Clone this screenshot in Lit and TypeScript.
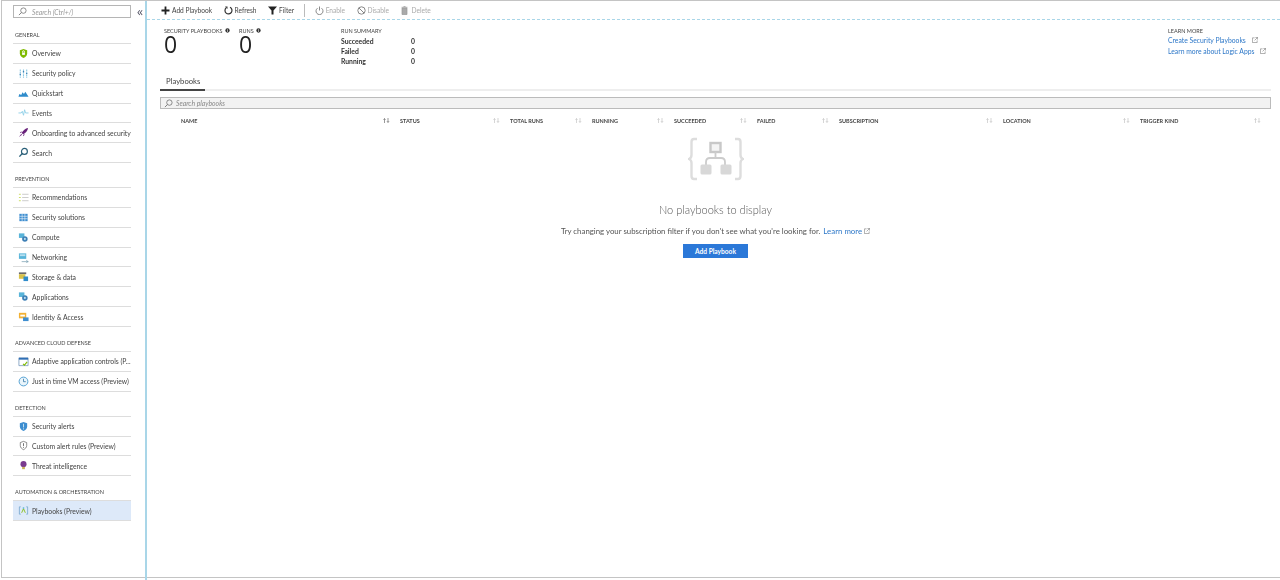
import { LitElement, html, css, svg } from 'lit'
import { customElement } from 'lit/decorators.js'

const icons: Record<string, unknown> = {
    overview: svg`<path d="M6 1 10 2.500V6c0 2.500-1.800 4-4 5-2.200-1-4-2.500-4-5V2.500z" fill="#7fba00"/><path d="M4.500 5h3v2.500h-3z" fill="#fff"/><path d="M5 5V4a1 1 0 0 1 2 0v1" fill="none" stroke="#fff"/>`,
    policy: svg`<path d="M2.500 1.500v9M6 1.500v9M9.500 1.500v9" stroke="#8cc8e2" stroke-width="1.200" stroke-dasharray="2 .6"/><path d="M1.800 7h1.400M5.300 4h1.400M8.800 6h1.400" stroke="#3e7fb5" stroke-width="1.200"/>`,
    quickstart: svg`<path d="M.500 9.500 1.500 6.500l2 1 1.500-3 1.500 2 1.500-2.500 3.500 5.500z" fill="#2f8ccb"/>`,
    events: svg`<path d="M.500 6.500h3l1.200-1.800L6 9l1.200-6 1 3.500h3.300" fill="none" stroke="#8fd0e8" stroke-width="1"/>`,
    rocket: svg`<path d="M11 1C8 1.500 5.500 3.500 4 6.500L5.500 8C8.500 6.500 10.500 4 11 1zM4 4.500 2 6l1.500.5zM7.500 8 6 10l-.5-1.500zM3.500 7.500 1 11l3.500-2.500z" fill="#68217a"/>`,
    search: svg`<circle cx="7" cy="4.800" r="3.200" fill="none" stroke="#2a5f78" stroke-width="1.300"/><path d="M4.700 7.200 1.500 10.500" stroke="#2a5f78" stroke-width="1.500"/>`,
    recs: svg`<path d="M4.500 2.500h7M4.500 6h7M4.500 9.500h7" stroke="#bbb" stroke-width=".8"/><path d="M1 2.500h2M1 6h2M1 9.500h2" stroke="#c8dc5a" stroke-width="1"/>`,
    solutions: svg`<path d="M1.500 2h9v8h-9z" fill="#3e8ed0"/><path d="M4.500 2v8M7.500 2v8M1.500 4.700h9M1.500 7.300h9" stroke="#fff" stroke-width=".6"/>`,
    compute: svg`<path d="M1 1.500h6v5H1z" fill="#59b4d9"/><circle cx="7.500" cy="7.500" r="3" fill="#3e7fb5"/><circle cx="7.500" cy="7.500" r="1.100" fill="#b8e0f0"/>`,
    network: svg`<path d="M1 1.500h8v6H1z" fill="#59b4d9"/><path d="M2 2.500h6v2H2z" fill="#b8e0f0"/><path d="M4 10.500h7.500M9 9 11 10.500 9 11.500" stroke="#7a9fb0" fill="none" stroke-width=".8"/>`,
    storage: svg`<path d="M1 1.500h8v2H1z" fill="#6b6b6b"/><path d="M1 3.500h7v5H1z" fill="#d9c24a"/><path d="M6 6h5v5H6z" fill="#2f8ccb"/>`,
    identity: svg`<path d="M1 2h8v6H1z" fill="#f2b134"/><path d="M2.500 4h5v2h-5z" fill="#fff"/><path d="M5.500 7h6v4h-6z" fill="#3e8ed0"/>`,
    adaptive: svg`<path d="M1 2h10v8.500H1z" fill="#fff" stroke="#6a8fb5" stroke-width=".8"/><path d="M1 2h10v2H1z" fill="#2f6fb5"/><path d="M5.500 8.500 7 10l3-3.500" stroke="#7fba00" fill="none" stroke-width="1.200"/>`,
    clock: svg`<circle cx="6" cy="6" r="4.800" fill="#eaf5fb" stroke="#4a9bd0"/><path d="M6 3v3.200h2.500" stroke="#2a6f9f" fill="none" stroke-width=".8"/>`,
    alerts: svg`<path d="M6 1 10 2.500V6c0 2.500-1.800 4-4 5-2.200-1-4-2.500-4-5V2.500z" fill="#3e8ed0"/><path d="M6 3v4M6 8v1.200" stroke="#cfe8f5"/>`,
    custom: svg`<path d="M6 1.500 9.500 2.800V6c0 2.200-1.500 3.500-3.500 4.500C4 9.500 2.500 8.200 2.500 6V2.800z" fill="none" stroke="#666" stroke-width=".8"/><path d="M6 3.500v3M6 7.500v1" stroke="#666"/>`,
    threat: svg`<circle cx="6" cy="4.500" r="3.300" fill="#7a3b8f"/><path d="M4.500 7.500h3V10h-3z" fill="#c9b458"/>`,
    playbooks: svg`<path d="M3 2 1.500 2v8H3M9 2h1.500v8H9" fill="none" stroke="#6a9fc9" stroke-width=".8"/><path d="M4 8.500 6 4l2 4.500" fill="none" stroke="#7fba00" stroke-width=".9"/><path d="M5.200 2.500h1.600v1.600H5.200z" fill="#59b4d9"/>`,
}

const sections = [
    {
        title: 'GENERAL',
        items: [
            ['overview', 'Overview'],
            ['policy', 'Security policy'],
            ['quickstart', 'Quickstart'],
            ['events', 'Events'],
            ['rocket', 'Onboarding to advanced security'],
            ['search', 'Search'],
        ],
    },
    {
        title: 'PREVENTION',
        items: [
            ['recs', 'Recommendations'],
            ['solutions', 'Security solutions'],
            ['compute', 'Compute'],
            ['network', 'Networking'],
            ['storage', 'Storage & data'],
            ['compute', 'Applications'],
            ['identity', 'Identity & Access'],
        ],
    },
    {
        title: 'ADVANCED CLOUD DEFENSE',
        items: [
            ['adaptive', 'Adaptive application controls (P...'],
            ['clock', 'Just in time VM access (Preview)'],
        ],
    },
    {
        title: 'DETECTION',
        items: [
            ['alerts', 'Security alerts'],
            ['custom', 'Custom alert rules (Preview)'],
            ['threat', 'Threat intelligence'],
        ],
    },
    {
        title: 'AUTOMATION & ORCHESTRATION',
        items: [['playbooks', 'Playbooks (Preview)']],
    },
]

const columns = ['NAME', 'STATUS', 'TOTAL RUNS', 'RUNNING', 'SUCCEEDED', 'FAILED', 'SUBSCRIPTION', 'LOCATION', 'TRIGGER KIND']

const externalIcon = html`<svg class="ext" viewBox="0 0 7 7"><path d="M3 1H.500v5.500H6V4M4 .500h2.500V3M6.500 .500 3 4" fill="none" stroke="#777" stroke-width=".7"/></svg>`
const infoIcon = html`<svg class="info" viewBox="0 0 6 6"><circle cx="3" cy="3" r="2.600" fill="#333"/><path d="M3 2.600v2M3 1.200v.8" stroke="#fff" stroke-width=".8"/></svg>`
const magnifier = html`<svg class="glass" viewBox="0 0 10 10"><circle cx="6" cy="4" r="3" fill="none" stroke="#666" stroke-width=".8"/><path d="M3.800 6.200 1 9" stroke="#666" stroke-width=".9"/></svg>`
const sortIcon = html`<svg class="sort" viewBox="0 0 7 5"><path d="M1.500 5V.800M.500 1.800 1.500 .500l1 1.300M5 0v4.200M4 3.200 5 4.500l1-1.300" fill="none" stroke="currentColor" stroke-width=".6"/></svg>`

@customElement('app-root')
export class AppRoot extends LitElement {
    static styles = css`
        :host {
            display: block;
            width: 1280px;
            height: 580px;
            overflow: hidden;
            background: #fff;
            font-family: Lato, 'Open Sans', 'Liberation Sans', sans-serif;
            font-size: 6.800px;
            color: #444;
        }

        .frame {
            display: flex;
            height: 578px;
            margin-left: 1px;
            box-sizing: border-box;
            border-left: 1px solid #c4c4c4;
            border-top: 1px solid #c4c4c4;
            border-bottom: 1px solid #c4c4c4;
            filter: blur(0.3px);
        }

        .sidebar {
            flex: none;
            width: 145px;
            box-sizing: border-box;
            padding: 4px 0 0 11px;
            border-right: 2px solid #a9d6e8;
            height: 580px;
        }

        .side-top {
            display: flex;
            align-items: center;
            width: 131px;
            margin-bottom: 1px;
        }

        .side-search {
            display: flex;
            align-items: center;
            gap: 5px;
            box-sizing: border-box;
            width: 118px;
            height: 13px;
            padding-left: 4px;
            border: 1px solid #b5b5b5;
            font-style: italic;
            color: #999;
        }

        .glass {
            width: 9px;
            height: 9px;
            flex: none;
        }

        .collapse {
            margin-left: 6px;
            font-family: 'Open Sans', sans-serif;
            font-size: 12px;
            line-height: 10px;
            color: #556;
        }

        .section {
            width: 118px;
        }

        .heading {
            display: flex;
            align-items: flex-end;
            box-sizing: border-box;
            height: 25px;
            padding: 0 0 5px 2px;
            font-size: 5.500px;
            color: #444;
            border-bottom: 1px solid #ddd;
        }

        .row {
            display: flex;
            align-items: center;
            gap: 3px;
            box-sizing: border-box;
            height: 19.850px;
            padding-left: 5px;
            border-bottom: 1px solid #ddd;
            white-space: nowrap;
        }

        .row.active {
            background: #dde9f9;
        }

        .row svg {
            width: 11px;
            height: 11px;
            flex: none;
        }

        .main {
            flex: 1;
            min-width: 0;
            display: flex;
            flex-direction: column;
        }

        .toolbar {
            display: flex;
            align-items: center;
            box-sizing: border-box;
            height: 19px;
            padding-left: 14px;
            border-bottom: 1px dashed #a9d6e8;
            font-size: 6.600px;
        }

        .tool {
            display: flex;
            align-items: center;
            gap: 2px;
            margin-right: 11.500px;
            white-space: nowrap;
        }

        .tool svg {
            width: 9px;
            height: 9px;
            flex: none;
        }

        .tool.off {
            color: #aaa;
        }

        .divider {
            width: 1px;
            height: 13px;
            background: #bbb;
            margin: 0 10px 0 -2px;
        }

        .summary {
            display: flex;
            height: 55px;
            padding: 7px 0 0 17px;
            box-sizing: border-box;
        }

        .stat {
            width: 75px;
        }

        .stat + .stat {
            width: 102px;
        }

        .label {
            display: flex;
            align-items: center;
            gap: 2px;
            height: 7px;
            font-size: 5.500px;
            color: #444;
        }

        .runs .label {
            margin-bottom: 2px;
        }

        .info {
            width: 5px;
            height: 5px;
        }

        .big {
            font-family: 'Open Sans', sans-serif;
            font-size: 23px;
            line-height: 20px;
            font-weight: 400;
            color: #222;
        }

        .run-row {
            display: flex;
            height: 10px;
            align-items: center;
            font-weight: 700;
            color: #333;
        }

        .run-row span:first-child {
            width: 70px;
        }

        .learn {
            margin-left: auto;
            width: 112px;
        }

        .learn a {
            display: flex;
            align-items: center;
            height: 11px;
            color: #2e78c8;
            white-space: nowrap;
        }

        .ext {
            width: 6px;
            height: 6px;
            flex: none;
            margin-left: 6px;
        }

        .body {
            padding: 0 9px 0 13px;
        }

        .tabs {
            height: 14px;
            border-bottom: 2px solid #eee;
            display: flex;
        }

        .tab {
            width: 39px;
            height: 14px;
            padding-left: 6px;
            font-size: 7.700px;
            line-height: 12px;
            border-bottom: 2px solid #444;
        }

        .filter {
            display: flex;
            align-items: center;
            gap: 3px;
            box-sizing: border-box;
            height: 12px;
            margin-top: 6px;
            padding-left: 3px;
            background: #f2f2f2;
            border: 1px solid #bbb;
            font-style: italic;
            color: #888;
        }

        .thead {
            display: grid;
            grid-template-columns: 240px 110px 82px 82px 83px 82px 164px 137px 131px;
            margin-top: 7.500px;
            height: 8px;
        }

        .th {
            display: flex;
            align-items: center;
            justify-content: space-between;
            padding-right: 10px;
            font-size: 5.500px;
            font-weight: 700;
            color: #444;
        }

        .th:first-child {
            padding-left: 21px;
        }

        .sort {
            width: 7px;
            height: 5px;
            color: #bbb;
        }

        .th:first-child .sort {
            color: #555;
        }

        .empty {
            display: flex;
            flex-direction: column;
            align-items: center;
            margin-top: 12.500px;
        }

        .empty svg.art {
            width: 56px;
            height: 44px;
        }

        .empty h2 {
            margin: 22px 0 0;
            font-size: 11px;
            line-height: 14px;
            font-weight: 300;
            color: #555;
        }

        .empty p {
            display: flex;
            align-items: center;
            margin: 8px 0 0;
            font-size: 7.850px;
            line-height: 12px;
            font-weight: 400;
            color: #555;
            white-space: nowrap;
        }

        .empty p a {
            color: #2e78c8;
            margin-left: 3px;
        }

        .empty p .ext {
            margin-left: 2px;
        }

        .add-btn {
            margin-top: 7px;
            width: 65px;
            height: 14px;
            line-height: 14px;
            text-align: center;
            background: #2b78d8;
            color: #fff;
            font-weight: 700;
            font-size: 6.600px;
        }
    `

    render() {
        return html`
            <div class="frame">
                <aside class="sidebar">
                    <div class="side-top">
                        <div class="side-search">${magnifier}<span>Search (Ctrl+/)</span></div>
                        <span class="collapse">«</span>
                    </div>
                    ${sections.map(
                        (s) => html`
                            <div class="section">
                                <div class="heading">${s.title}</div>
                                ${s.items.map(
                                    ([icon, label]) => html`
                                        <div class="row ${label.startsWith('Playbooks') ? 'active' : ''}">
                                            <svg viewBox="0 0 12 12">${icons[icon]}</svg><span>${label}</span>
                                        </div>
                                    `
                                )}
                            </div>
                        `
                    )}
                </aside>
                <main class="main">
                    <div class="toolbar">
                        <div class="tool"><svg viewBox="0 0 9 9"><path d="M4.500 .500v8M.500 4.500h8" stroke="#222" stroke-width="1.800"/></svg>Add Playbook</div>
                        <div class="tool"><svg viewBox="0 0 9 9"><path d="M2.200 1.800A3.500 3.500 0 1 0 6 1.300" fill="none" stroke="#333" stroke-width="1.200"/><path d="M1 .500h2.500V3z" fill="#333"/></svg>Refresh</div>
                        <div class="tool"><svg viewBox="0 0 9 9"><path d="M0 .500h9L5.500 4.500V8.500H3.500V4.500z" fill="#222"/></svg>Filter</div>
                        <div class="divider"></div>
                        <div class="tool off"><svg viewBox="0 0 9 9"><path d="M2.500 2.200a3.500 3.500 0 1 0 4 0" fill="none" stroke="#888"/><path d="M4.500 .500v4" stroke="#888"/></svg>Enable</div>
                        <div class="tool off"><svg viewBox="0 0 9 9"><circle cx="4.500" cy="4.500" r="3.700" fill="none" stroke="#888"/><path d="M2 2l5 5" stroke="#888"/></svg>Disable</div>
                        <div class="tool off"><svg viewBox="0 0 9 9"><path d="M2 2h5v6.500H2zM1.500 1.300h6M3.500 .500h2" fill="#aaa" stroke="#999" stroke-width=".7"/></svg>Delete</div>
                    </div>
                    <div class="summary">
                        <div class="stat"><div class="label">SECURITY PLAYBOOKS ${infoIcon}</div><div class="big">0</div></div>
                        <div class="stat"><div class="label">RUNS ${infoIcon}</div><div class="big">0</div></div>
                        <div class="runs">
                            <div class="label">RUN SUMMARY</div>
                            <div class="run-row"><span>Succeeded</span><span>0</span></div>
                            <div class="run-row"><span>Failed</span><span>0</span></div>
                            <div class="run-row"><span>Running</span><span>0</span></div>
                        </div>
                        <div class="learn">
                            <div class="label">LEARN MORE</div>
                            <a>Create Security Playbooks ${externalIcon}</a>
                            <a>Learn more about Logic Apps ${externalIcon}</a>
                        </div>
                    </div>
                    <div class="body">
                        <div class="tabs"><div class="tab">Playbooks</div></div>
                        <div class="filter">${magnifier}<span>Search playbooks</span></div>
                        <div class="thead">
                            ${columns.map((c) => html`<div class="th"><span>${c}</span>${sortIcon}</div>`)}
                        </div>
                        <div class="empty">
                            <svg class="art" viewBox="0 0 56 44">
                                <path d="M9 2H6Q3.500 2 3.500 5V18Q3.500 21 1 22 3.500 23 3.500 26V39Q3.500 42 6 42H9M47 2h3q2.500 0 2.500 3V18q0 3 2.500 4-2.500 1-2.500 4V39q0 3-2.500 3H47" fill="none" stroke="#ddd" stroke-width="2.400"/>
                                <rect x="22.500" y="6" width="10" height="9" fill="#f4f4f4" stroke="#c8c8c8" stroke-width="2.400"/>
                                <path d="M27.500 15v6M18 28v-3q0-4 4-4h11q4 0 4 4v3" fill="none" stroke="#ccc" stroke-width="1.800"/>
                                <rect x="12.500" y="27.500" width="11" height="10" rx="1.500" fill="#d8d8d8"/>
                                <rect x="32.500" y="27.500" width="11" height="10" rx="1.500" fill="#d8d8d8"/>
                            </svg>
                            <h2>No playbooks to display</h2>
                            <p>Try changing your subscription filter if you don't see what you're looking for. <a>Learn more</a>${externalIcon}</p>
                            <div class="add-btn">Add Playbook</div>
                        </div>
                    </div>
                </main>
            </div>
        `
    }
}
